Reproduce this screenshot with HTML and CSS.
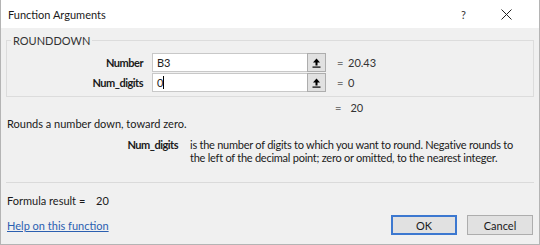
FILE: index.html
```html
<!DOCTYPE html>
<html lang="en">
<head>
  <meta charset="UTF-8">
  <title>Function Arguments</title>
  <link rel="stylesheet" href="styles.css">
</head>
<body>
  <div class="dialog">
    <div class="titlebar">
      <span class="title">Function Arguments</span>
      <span class="help-q">?</span>
      <span class="close">
        <svg width="11" height="11" viewBox="0 0 11 11"><path d="M0.5 0.5 L10.5 10.5 M10.5 0.5 L0.5 10.5" stroke="#222" stroke-width="1" fill="none"/></svg>
      </span>
    </div>

    <div class="content">
      <fieldset class="group">
        <legend>ROUNDDOWN</legend>
        <div class="arg-row">
          <label class="arg-name">Number</label>
          <div class="field">B3</div>
          <button class="collapse">
            <svg width="9" height="10" viewBox="0 0 9 10"><path d="M4.5 0.5 L8 4.5 L5.5 4.5 L5.5 7.5 L3.5 7.5 L3.5 4.5 L1 4.5 Z" fill="#000"/><rect x="0.5" y="8.5" width="8" height="1.2" fill="#000"/></svg>
          </button>
          <span class="eq">=</span>
          <span class="val">20.43</span>
        </div>
        <div class="arg-row">
          <label class="arg-name">Num_digits</label>
          <div class="field">0<span class="caret"></span></div>
          <button class="collapse">
            <svg width="9" height="10" viewBox="0 0 9 10"><path d="M4.5 0.5 L8 4.5 L5.5 4.5 L5.5 7.5 L3.5 7.5 L3.5 4.5 L1 4.5 Z" fill="#000"/><rect x="0.5" y="8.5" width="8" height="1.2" fill="#000"/></svg>
          </button>
          <span class="eq">=</span>
          <span class="val">0</span>
        </div>
      </fieldset>

      <div class="result-row">
        <span class="eq">=</span>
        <span class="val">20</span>
      </div>

      <p class="summary">Rounds a number down, toward zero.</p>

      <div class="arg-help">
        <b class="arg-help-name">Num_digits</b>
        <p class="arg-help-text">is the number of digits to which you want to round. Negative rounds to the left of the decimal point; zero or omitted, to the nearest integer.</p>
      </div>
    </div>

    <div class="footer">
      <div class="formula">Formula result = <span class="formula-val">20</span></div>
      <div class="actions">
        <a href="#" class="help-link">Help on this function</a>
        <div class="buttons">
          <button class="btn btn-ok">OK</button>
          <button class="btn">Cancel</button>
        </div>
      </div>
    </div>
  </div>
</body>
</html>
```

FILE: styles.css
```css
* {
  box-sizing: border-box;
}

body {
  margin: 0;
  background: #ffffff;
  font-family: Lato, "Noto Sans", sans-serif;
  font-size: 11px;
  color: #1a1a1a;
}

.dialog {
  width: 540px;
  height: 245px;
  border: 1px solid #b4b4b4;
  border-top: none;
  background: #f0f0f0;
  display: flex;
  flex-direction: column;
}

.titlebar {
  height: 28px;
  background: #ffffff;
  display: flex;
  align-items: center;
  padding-left: 7px;
}

.title {
  flex: 1;
}

.help-q {
  width: 40px;
  color: #333;
}

.close {
  width: 38px;
  display: flex;
}

.content {
  padding: 0 5px;
}

.group {
  margin: 6px 0 0;
  padding: 6px 0 3px;
  border: 1px solid #dcdcdc;
}

.group legend {
  margin-left: 4px;
  padding: 0 2px;
  color: #333;
}

.arg-row {
  display: grid;
  grid-template-columns: 145px 155px 19px 12px 1fr;
  align-items: center;
  height: 19px;
  margin-bottom: 1px;
}

.arg-name {
  font-weight: bold;
  text-align: right;
  padding-right: 9px;
  letter-spacing: -0.5px;
}

.field {
  height: 19px;
  background: #ffffff;
  border: 1px solid #c8c8c8;
  border-right: none;
  padding: 1px 4px;
  display: flex;
  align-items: center;
  color: #222;
}

.caret {
  width: 1px;
  height: 13px;
  background: #000;
}

.collapse {
  width: 19px;
  height: 19px;
  margin: 0;
  padding: 0;
  border: 1px solid #adadad;
  background: #e1e1e1;
  display: flex;
  align-items: center;
  justify-content: center;
}

.eq {
  padding-left: 11px;
  color: #777;
}

.val {
  padding-left: 10px;
  color: #333;
}

.result-row {
  display: flex;
  padding: 4px 0 0 318px;
  height: 19px;
  line-height: 14px;
}

.result-row .val {
  padding-left: 9px;
}

.summary {
  margin: 0;
  height: 16px;
  line-height: 16px;
  padding-left: 1px;
}

.arg-help {
  display: grid;
  grid-template-columns: 172px 1fr;
  column-gap: 12px;
  margin-top: 6px;
  line-height: 13px;
}

.arg-help-name {
  text-align: right;
  letter-spacing: -0.5px;
}

.arg-help-text {
  margin: 0;
  width: 330px;
  letter-spacing: -0.25px;
}

.footer {
  margin: auto 5px 0;
  border-top: 1px solid #dadada;
  padding: 10px 1px 9px;
}

.formula {
  height: 16px;
  line-height: 16px;
}

.formula-val {
  padding-left: 8px;
}

.actions {
  display: flex;
  align-items: center;
  justify-content: space-between;
  margin-top: 6px;
}

.help-link {
  color: #2b5fb0;
}

.buttons {
  display: flex;
  gap: 10px;
}

.btn {
  width: 66px;
  height: 20px;
  font: inherit;
  color: #1a1a1a;
  background: #e1e1e1;
  border: 1px solid #adadad;
  padding: 0;
}

.btn-ok {
  border: 2px solid #3c78d0;
}
```
